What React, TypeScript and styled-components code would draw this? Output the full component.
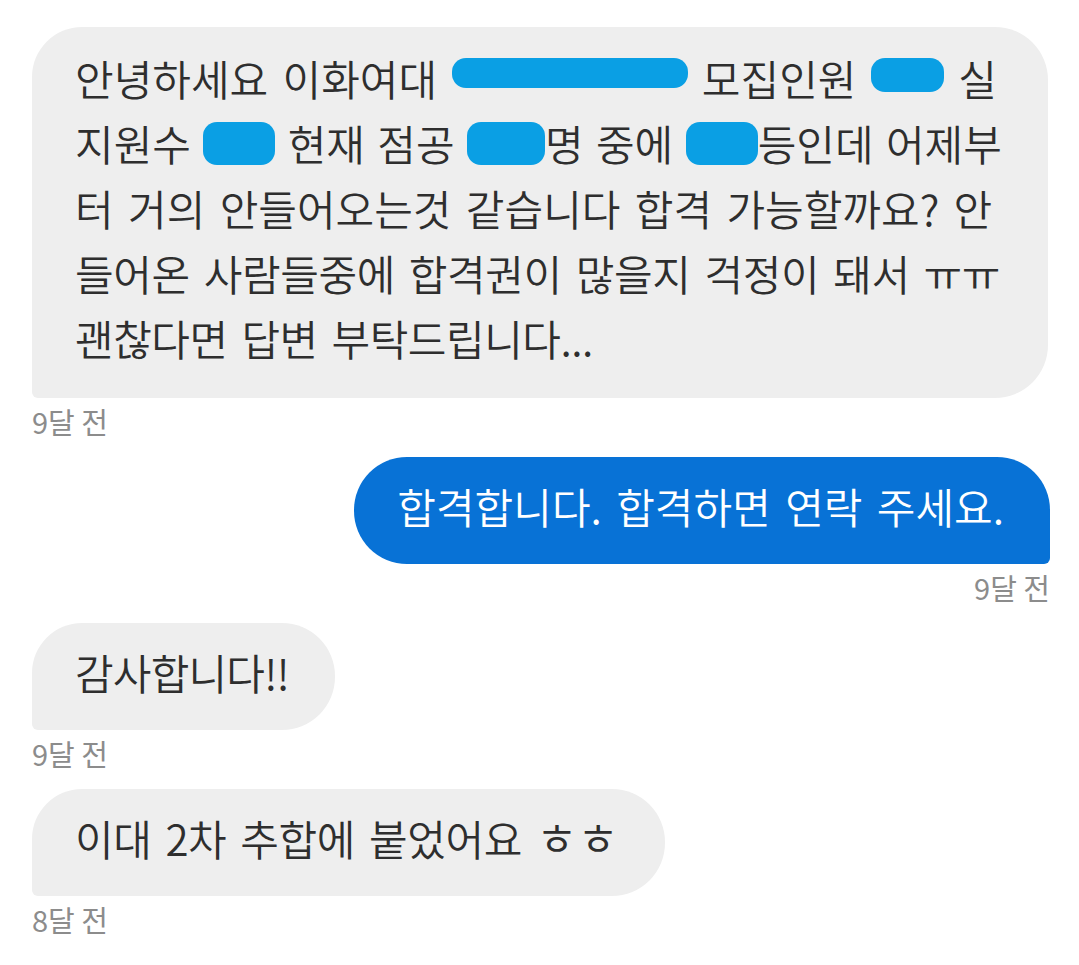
import React from "react";
import styled, { createGlobalStyle } from "styled-components";

const GlobalStyle = createGlobalStyle`
  html, body {
    margin: 0;
    padding: 0;
    background: #ffffff;
  }
  body {
    font-family: "Noto Sans CJK KR", "Noto Sans", sans-serif;
  }
`;

const Thread = styled.div`
  display: flex;
  flex-direction: column;
  padding: 27px 29px 0 32px;
`;

const Message = styled.div<{ $mine?: boolean }>`
  display: flex;
  flex-direction: column;
  align-items: ${(p) => (p.$mine ? "flex-end" : "flex-start")};
  margin-bottom: 19px;
`;

const Bubble = styled.div<{ $mine?: boolean; $padY?: number }>`
  background: ${(p) => (p.$mine ? "#0872d6" : "#eeeeee")};
  color: ${(p) => (p.$mine ? "#ffffff" : "#2e2e2e")};
  font-size: 42px;
  font-weight: 350;
  line-height: 65px;
  word-spacing: 5px;
  padding: ${(p) => (p.$padY ?? 21) - 5}px 46px ${(p) => (p.$padY ?? 21) + 5}px 43px;
  border-radius: ${(p) => (p.$mine ? "53px 53px 6px 53px" : "50px 53px 53px 6px")};
  white-space: nowrap;
`;

const Line = styled.div<{ $track?: number; $words?: number }>`
  display: block;
  height: 65px;
  letter-spacing: ${(p) => p.$track ?? 0}px;
  word-spacing: ${(p) => p.$words ?? 5}px;
`;

const Redact = styled.span<{ $w: number; $h: number; $lift: number }>`
  display: inline-block;
  width: ${(p) => p.$w}px;
  height: ${(p) => p.$h}px;
  background: #0a9fe4;
  border-radius: 14px;
  vertical-align: ${(p) => p.$lift}px;
`;

const Jamo = styled.span`
  font-size: 45px;
  line-height: 1;
  letter-spacing: 0;
`;

const Stamp = styled.div`
  margin-top: 6px;
  font-size: 29px;
  line-height: 34px;
  color: #8c8c8c;
`;

export default function App() {
  return (
    <>
      <GlobalStyle />
      <Thread>
        <Message>
          <Bubble $padY={23}>
            <Line>
              안녕하세요 이화여대 <Redact $w={236} $h={30} $lift={8} /> 모집인원{" "}
              <Redact $w={73} $h={34} $lift={4} /> 실
            </Line>
            <Line $words={3}>
              지원수 <Redact $w={72} $h={43} $lift={-4} /> 현재 점공{" "}
              <Redact $w={78} $h={43} $lift={-4} />명 중에{" "}
              <Redact $w={72} $h={43} $lift={-4} />등인데 어제부
            </Line>
            <Line>터 거의 안들어오는것 같습니다 합격 가능할까요? 안</Line>
            <Line $track={-0.4}>들어온 사람들중에 합격권이 많을지 걱정이 돼서 ㅠㅠ</Line>
            <Line $track={-0.5}>괜찮다면 답변 부탁드립니다...</Line>
          </Bubble>
          <Stamp>9달 전</Stamp>
        </Message>

        <Message $mine>
          <Bubble $mine>합격합니다. 합격하면 연락 주세요.</Bubble>
          <Stamp>9달 전</Stamp>
        </Message>

        <Message>
          <Bubble>
            <Line $track={-0.8}>감사합니다!!</Line>
          </Bubble>
          <Stamp>9달 전</Stamp>
        </Message>

        <Message>
          <Bubble>
            <Line $track={-0.4}>
              이대 2차 추합에 붙었어요 <Jamo>ㅎㅎ</Jamo>
            </Line>
          </Bubble>
          <Stamp>8달 전</Stamp>
        </Message>
      </Thread>
    </>
  );
}
